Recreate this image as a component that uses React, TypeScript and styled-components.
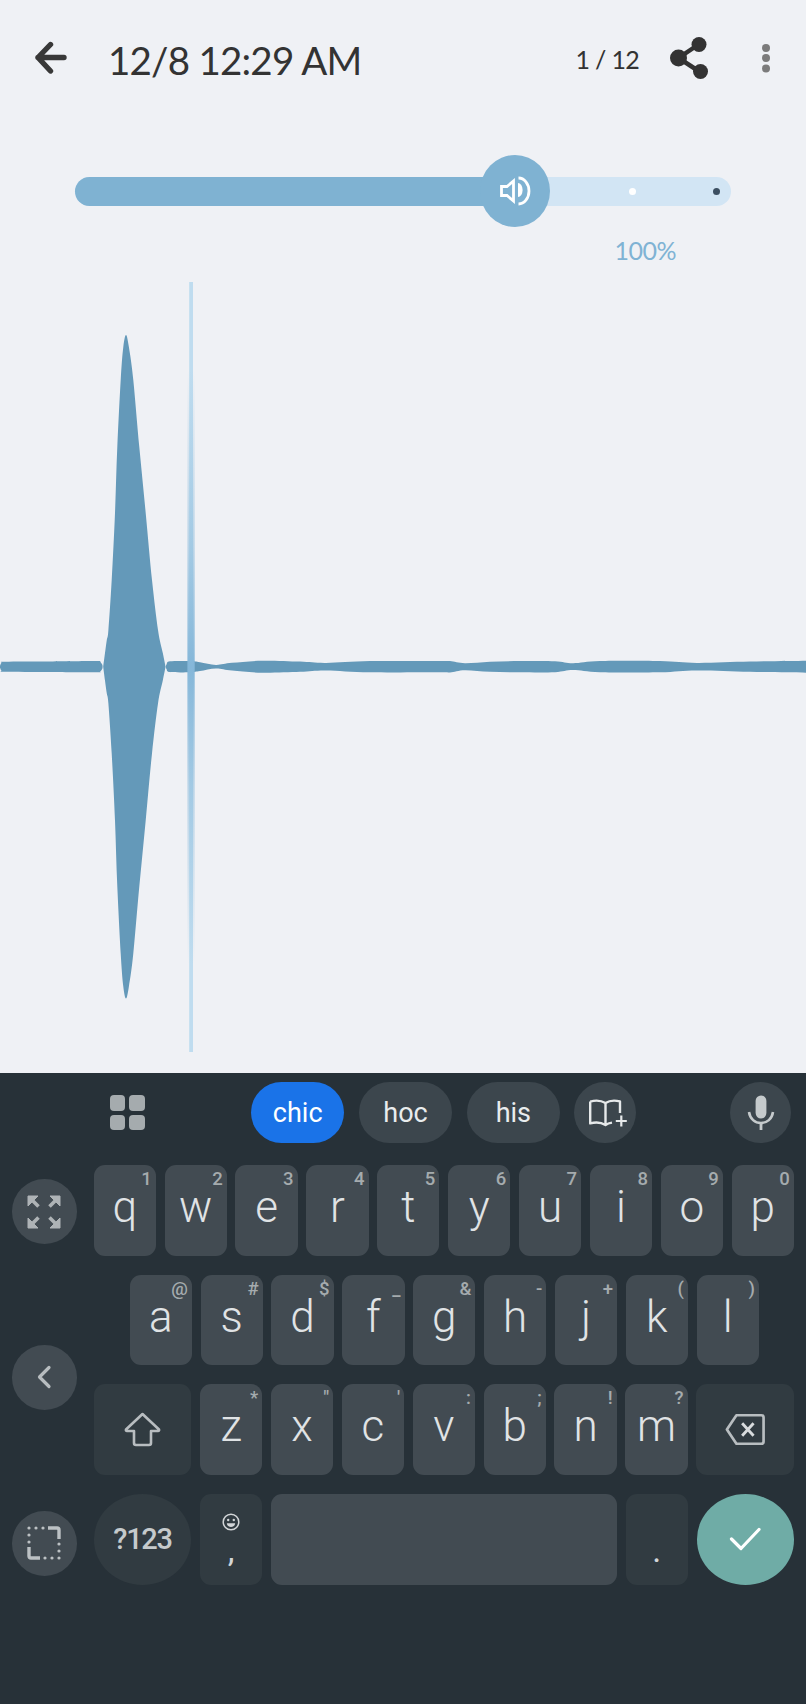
import React from "react";
import styled, { createGlobalStyle } from "styled-components";

const Global = createGlobalStyle`
  html, body { margin: 0; padding: 0; background: #eff1f5; }
  #root { width: 806px; height: 1704px; overflow: hidden; }
`;

const Page = styled.div`
  width: 806px;
  height: 1704px;
  display: flex;
  flex-direction: column;
  background: #eff1f5;
  font-family: Lato, "Noto Sans", sans-serif;
`;

const Header = styled.header`
  height: 115px;
  flex: none;
  display: flex;
  align-items: center;
  padding-left: 33px;
  color: #333;
`;
const BackButton = styled.svg`
  flex: none;
  width: 36px;
  height: 34px;
`;
const Title = styled.h1`
  margin: 4px 0 0 39px;
  font-size: 38.5px;
  line-height: 46px;
  font-weight: 400;
  letter-spacing: -0.77px;
  color: #333;
  white-space: nowrap;
`;
const Counter = styled.span`
  margin: 3px 0 0 auto;
  font-size: 25px;
  line-height: 30px;
  letter-spacing: -0.7px;
  color: #333;
  white-space: nowrap;
`;
const ShareIcon = styled.svg`
  flex: none;
  width: 40px;
  height: 42px;
  margin-left: 30px;
`;
const MoreIcon = styled.svg`
  flex: none;
  width: 10px;
  height: 30px;
  margin: 0 35px 0 52px;
`;

const SliderArea = styled.div`
  flex: none;
  height: 165px;
  padding: 62px 75px 0;
  box-sizing: border-box;
`;
const Track = styled.div`
  position: relative;
  height: 28.6px;
  border-radius: 15px;
  background: #d2e5f4;
`;
const TrackFill = styled.div`
  width: 442px;
  height: 100%;
  border-radius: 15px 0 0 15px;
  background: #7fb2d2;
`;
const Thumb = styled.div`
  position: absolute;
  left: 405px;
  top: -21.7px;
  width: 70px;
  height: 72px;
  border-radius: 50%;
  background: #7fb2d2;
  display: flex;
  align-items: center;
  justify-content: center;
`;
const Stop = styled.span<{ $at: number; $color: string }>`
  position: absolute;
  top: 11px;
  left: ${(p) => p.$at}px;
  width: 7px;
  height: 7px;
  border-radius: 50%;
  background: ${(p) => p.$color};
`;
const Percent = styled.div`
  margin: 29.5px 55px 0 0;
  text-align: right;
  font-size: 25px;
  line-height: 30px;
  letter-spacing: -0.5px;
  color: #7fb3d4;
`;

const Wave = styled.svg`
  display: block;
  flex: none;
  width: 806px;
  height: 793px;
`;

const Keyboard = styled.section`
  flex: 1;
  background: #273138;
  font-family: Roboto, sans-serif;
`;
const SuggestRow = styled.div`
  display: flex;
  align-items: center;
  height: 61.3px;
  margin-top: 9px;
  padding: 0 14.7px 0 110.3px;
`;
const GridIcon = styled.div`
  display: grid;
  grid-template-columns: 15.2px 15.2px;
  gap: 4px;
  margin-right: 106.3px;
`;
const GridCell = styled.span`
  height: 15.2px;
  border-radius: 4px;
  background: #a5abae;
`;
const Chip = styled.div<{ $active?: boolean }>`
  width: 93.5px;
  height: 61.3px;
  margin-right: 14.3px;
  border-radius: 31px;
  display: flex;
  align-items: center;
  justify-content: center;
  font-size: 27px;
  color: ${(p) => (p.$active ? "#ffffff" : "#e9ecee")};
  background: ${(p) => (p.$active ? "#1a73e8" : "#3c464d")};
`;
const RoundChip = styled.div<{ $end?: boolean }>`
  width: 61.3px;
  height: 61.3px;
  border-radius: 50%;
  background: #3c464d;
  display: flex;
  align-items: center;
  justify-content: center;
  margin-left: ${(p) => (p.$end ? "auto" : "0")};
`;

const Body = styled.div`
  display: flex;
  margin-top: 21.7px;
`;
const SideColumn = styled.div`
  flex: none;
  width: 93.7px;
  height: 420.7px;
  box-sizing: border-box;
  padding: 14.3px 0 10px 12px;
  display: flex;
  flex-direction: column;
  justify-content: space-between;
`;
const SideButton = styled.div`
  width: 64.7px;
  height: 64.7px;
  border-radius: 50%;
  background: #424b52;
  display: flex;
  align-items: center;
  justify-content: center;
`;
const Rows = styled.div`
  display: flex;
  flex-direction: column;
  gap: 19.1px;
`;
const Row = styled.div<{ $indent?: number }>`
  display: flex;
  gap: 8.7px;
  height: 90.6px;
  padding-left: ${(p) => p.$indent ?? 0}px;
`;
const Key = styled.div`
  position: relative;
  flex: none;
  width: 62.2px;
  height: 90.6px;
  border-radius: 11px;
  background: #424b52;
  text-align: center;
  font-size: 44px;
  font-weight: 300;
  line-height: 85px;
  color: #e0e3e5;
`;
const Hint = styled.span`
  position: absolute;
  top: 3px;
  right: 4px;
  font-size: 18.5px;
  line-height: 22px;
  font-weight: 500;
  color: #a5abae;
`;
const WideKey = styled.div<{ $round?: boolean; $accent?: boolean }>`
  flex: none;
  width: 97.7px;
  height: 90.6px;
  border-radius: ${(p) => (p.$round ? "50%" : "11px")};
  background: ${(p) => (p.$accent ? "#6faca6" : "#313b41")};
  display: flex;
  align-items: center;
  justify-content: center;
  font-size: 29px;
  font-weight: 500;
  letter-spacing: -1.3px;
  color: #c5cacc;
`;
const PunctKey = styled.div`
  flex: none;
  width: 62.2px;
  height: 90.6px;
  border-radius: 11px;
  background: #313b41;
  display: flex;
  flex-direction: column;
  align-items: center;
  color: #d3d6d8;
  padding-top: 19px;
  box-sizing: border-box;
`;
const SmileIcon = styled.svg<{ $hidden?: boolean }>`
  width: 18px;
  height: 18px;
  flex: none;
  visibility: ${(p) => (p.$hidden ? "hidden" : "visible")};
`;
const PunctMark = styled.span`
  font-size: 34px;
  line-height: 34px;
  font-weight: 400;
  margin-top: 2px;
`;
const SpaceKey = styled.div`
  flex: none;
  width: 346px;
  height: 90.6px;
  border-radius: 11px;
  background: #424b52;
`;

type Pt = [number, number];
const CY = 666.7;

function smooth(points: Pt[], sign: number): string {
  let d = "";
  for (let i = 0; i < points.length - 1; i++) {
    const p0 = points[Math.max(0, i - 1)];
    const p1 = points[i];
    const p2 = points[i + 1];
    const p3 = points[Math.min(points.length - 1, i + 2)];
    const c1: Pt = [p1[0] + (p2[0] - p0[0]) / 6, p1[1] + (p2[1] - p0[1]) / 6];
    const c2: Pt = [p2[0] - (p3[0] - p1[0]) / 6, p2[1] - (p3[1] - p1[1]) / 6];
    d += `C${c1[0].toFixed(1)} ${(CY - sign * c1[1]).toFixed(1)} ${c2[0].toFixed(1)} ${(CY - sign * c2[1]).toFixed(1)} ${p2[0]} ${(CY - sign * p2[1]).toFixed(1)}`;
  }
  return d;
}
function mirrored(pts: Pt[]): string {
  const first = pts[0];
  const last = pts[pts.length - 1];
  const rev = [...pts].reverse();
  return `M${first[0]} ${CY - first[1]}${smooth(pts, 1)}L${last[0]} ${CY + last[1]}${smooth(rev, -1)}Z`;
}

const leftSeg: Pt[] = [[0, 1], [1.5, 4], [5, 5], [50, 5.2], [96, 5.6], [100, 5], [102.3, 2], [102.6, 0]];
const rightSeg: Pt[] = [[165.8, 0], [166.6, 2.5], [170, 5.4], [190, 5.6], [200, 4.4], [216, 1.8], [232, 3.9], [262, 6], [300, 5.1], [326, 3.7], [370, 5.6], [440, 5.6], [450, 5.7], [465, 3.5], [490, 5], [520, 5.6], [555, 5.5], [573, 3.4], [600, 5.6], [660, 5.6], [697, 3.8], [750, 5.1], [806, 6]];

// Outline of the tall burst, upper half, left to right; the lower half mirrors it.
const spike: Pt[] = [[103.2, 0], [105, 13.7], [106.8, 26.7], [108.4, 36.7], [111.7, 86.7], [115, 153.7], [117.3, 219.7], [120.7, 286.7], [123.3, 319.7], [126, 331.7], [128.9, 319.7], [133.3, 286.7], [139.3, 219.7], [145.7, 153.7], [152, 86.7], [158, 36.7], [162.8, 13.7], [165.6, 0]];

const row1: [string, string][] = [["q","1"],["w","2"],["e","3"],["r","4"],["t","5"],["y","6"],["u","7"],["i","8"],["o","9"],["p","0"]];
const row2: [string, string][] = [["a","@"],["s","#"],["d","$"],["f","_"],["g","&"],["h","-"],["j","+"],["k","("],["l",")"]];
const row3: [string, string][] = [["z","*"],["x","\""],["c","'"],["v",":"],["b",";"],["n","!"],["m","?"]];

const LetterKeys = ({ keys }: { keys: [string, string][] }) => (
  <>
    {keys.map(([l, h]) => (
      <Key key={l}>
        {l}
        <Hint>{h}</Hint>
      </Key>
    ))}
  </>
);

export default function App() {
  return (
    <Page>
      <Global />
      <Header>
        <BackButton viewBox="0 0 36 34">
          <path d="M17.5 3.5 L5 16.5 L17.5 30 M5 16.5 H31" fill="none" stroke="#383838" strokeWidth="5.4" strokeLinecap="round" strokeLinejoin="round" />
        </BackButton>
        <Title>12/8 12:29 AM</Title>
        <Counter>1 / 12</Counter>
        <ShareIcon viewBox="0 0 40 42">
          <path d="M29.5 7.5 L9.5 21 L31 35" fill="none" stroke="#333" strokeWidth="4.5" />
          <circle cx="30" cy="7.5" r="7.5" fill="#333" />
          <circle cx="9.5" cy="21" r="8.5" fill="#333" />
          <circle cx="31.5" cy="34.5" r="7.5" fill="#333" />
        </ShareIcon>
        <MoreIcon viewBox="0 0 10 30">
          <circle cx="5" cy="5" r="4" fill="#7b7b7b" />
          <circle cx="5" cy="15" r="4" fill="#7b7b7b" />
          <circle cx="5" cy="25.5" r="4" fill="#7b7b7b" />
        </MoreIcon>
      </Header>

      <SliderArea>
        <Track>
          <TrackFill />
          <Thumb>
            <svg width="32" height="30" viewBox="0 0 32 30">
              <path d="M2.5 10.5 H8 L14.5 5 V25 L8 19.5 H2.5 Z" fill="none" stroke="#fff" strokeWidth="2.8" />
              <path d="M19 7 A4.6 7 0 0 1 19 21 Z" fill="#fff" />
              <path d="M19.5 2 A10.5 13 0 0 1 19.5 28" fill="none" stroke="#fff" strokeWidth="2.8" />
            </svg>
          </Thumb>
          <Stop $at={554} $color="#ffffff" />
          <Stop $at={638} $color="#3c4f61" />
        </Track>
        <Percent>100%</Percent>
      </SliderArea>

      <Wave viewBox="0 280 806 793">
        <defs>
          <linearGradient id="headGrad" x1="0" y1="0" x2="0" y2="1">
            <stop offset="0" stopColor="#85b7d9" stopOpacity="0" />
            <stop offset="0.3" stopColor="#85b7d9" stopOpacity="0.5" />
            <stop offset="0.5" stopColor="#85b7d9" />
            <stop offset="0.7" stopColor="#85b7d9" stopOpacity="0.5" />
            <stop offset="1" stopColor="#85b7d9" stopOpacity="0" />
          </linearGradient>
        </defs>
        <path d={mirrored(leftSeg)} fill="#6499b9" />
        <path d={mirrored(spike)} fill="#6499b9" />
        <path d={mirrored(rightSeg)} fill="#6499b9" />
        <rect x="189.2" y="282" width="3.8" height="770" fill="#bfdcef" />
        <rect x="187.4" y="370" width="7.3" height="594" fill="url(#headGrad)" />
      </Wave>

      <Keyboard>
        <SuggestRow>
          <GridIcon>
            <GridCell />
            <GridCell />
            <GridCell />
            <GridCell />
          </GridIcon>
          <Chip $active>chic</Chip>
          <Chip>hoc</Chip>
          <Chip>his</Chip>
          <RoundChip>
            <svg width="47" height="30" viewBox="0 0 47 30">
              <path d="M8.2 3.6 C13 2.2 19 2.4 23.5 5 C27.5 2.4 33 2.2 38 3.4 V15 M8.2 3.6 V25.4 C13 24 19 24.2 23.5 27 C25.5 25.6 27.5 25 30 24.6 M23.5 5 V27" fill="none" stroke="#e6e9ea" strokeWidth="2.4" strokeLinejoin="round" />
              <path d="M39.3 17.5 V28.5 M33.8 23 H44.8" fill="none" stroke="#e6e9ea" strokeWidth="2.2" />
            </svg>
          </RoundChip>
          <RoundChip $end>
            <svg width="28" height="36" viewBox="0 0 28 36">
              <rect x="8.6" y="0.5" width="10.8" height="23" rx="5.4" fill="#c5cacc" />
              <path d="M2 17 C3 24 8 28 14 28 C20 28 25 24 26 17" fill="none" stroke="#c5cacc" strokeWidth="2.6" />
              <path d="M14 28 V35" stroke="#c5cacc" strokeWidth="2.8" />
            </svg>
          </RoundChip>
        </SuggestRow>
        <Body>
          <SideColumn>
            <SideButton>
              <svg width="34" height="34" viewBox="0 0 34 34">
                <g fill="#aeb3b6" stroke="#aeb3b6">
                  <path d="M1 1 H11 L1 11 Z" strokeWidth="1" />
                  <path d="M33 1 H23 L33 11 Z" strokeWidth="1" />
                  <path d="M1 33 H11 L1 23 Z" strokeWidth="1" />
                  <path d="M33 33 H23 L33 23 Z" strokeWidth="1" />
                  <path d="M4 4 L11.5 11.5 M30 4 L22.5 11.5 M4 30 L11.5 22.5 M30 30 L22.5 22.5" strokeWidth="3.6" fill="none" />
                </g>
              </svg>
            </SideButton>
            <SideButton>
              <svg width="16" height="24" viewBox="0 0 16 24">
                <path d="M13 2.5 L3.5 12 L13 21.5" fill="none" stroke="#b8bdc0" strokeWidth="3.2" strokeLinecap="round" strokeLinejoin="round" />
              </svg>
            </SideButton>
            <SideButton>
              <svg width="34" height="34" viewBox="0 0 34 34">
                <path d="M21 2 H30 Q32 2 32 4 V13" fill="none" stroke="#bcc1c4" strokeWidth="3.4" />
                <path d="M13 32 H4 Q2 32 2 30 V21" fill="none" stroke="#bcc1c4" strokeWidth="3.4" />
                <g fill="#bcc1c4">
                  <circle cx="2" cy="2" r="1.6" />
                  <circle cx="9" cy="2" r="1.6" />
                  <circle cx="16" cy="2" r="1.6" />
                  <circle cx="2" cy="9" r="1.6" />
                  <circle cx="2" cy="16" r="1.6" />
                  <circle cx="32" cy="18" r="1.6" />
                  <circle cx="32" cy="25" r="1.6" />
                  <circle cx="32" cy="32" r="1.6" />
                  <circle cx="18" cy="32" r="1.6" />
                  <circle cx="25" cy="32" r="1.6" />
                </g>
              </svg>
            </SideButton>
          </SideColumn>
          <Rows>
            <Row>
              <LetterKeys keys={row1} />
            </Row>
            <Row $indent={36}>
              <LetterKeys keys={row2} />
            </Row>
            <Row>
              <WideKey>
                <svg width="37" height="35" viewBox="0 0 37 35">
                  <path d="M18.5 2 L35 17.5 Q35.5 19 34 19 H27 V31 Q27 33 25 33 H12 Q10 33 10 31 V19 H3 Q1.5 19 2 17.5 Z" fill="none" stroke="#b8bdc0" strokeWidth="2.6" strokeLinejoin="round" />
                </svg>
              </WideKey>
              <LetterKeys keys={row3} />
              <WideKey>
                <svg width="40" height="33" viewBox="0 0 42 34">
                  <path d="M12 2 H38 Q40.5 2 40.5 4.5 V29.5 Q40.5 32 38 32 H12 L2 17 Z" fill="none" stroke="#b8bdc0" strokeWidth="2.8" strokeLinejoin="round" />
                  <path d="M18 10.5 L30 23.5 M30 10.5 L18 23.5" stroke="#d8dbdd" strokeWidth="3" />
                </svg>
              </WideKey>
            </Row>
            <Row>
              <WideKey $round>?123</WideKey>
              <PunctKey>
                <SmileIcon viewBox="0 0 18 18">
                  <circle cx="9" cy="9" r="7.8" fill="none" stroke="#d3d6d8" strokeWidth="1.5" />
                  <circle cx="6.2" cy="7" r="1.2" fill="#d3d6d8" />
                  <circle cx="11.8" cy="7" r="1.2" fill="#d3d6d8" />
                  <path d="M4.8 10.2 H13.2 C12.8 13 11 14 9 14 C7 14 5.2 13 4.8 10.2 Z" fill="#d3d6d8" />
                </SmileIcon>
                <PunctMark>,</PunctMark>
              </PunctKey>
              <SpaceKey />
              <PunctKey>
                <SmileIcon $hidden viewBox="0 0 18 18" />
                <PunctMark>.</PunctMark>
              </PunctKey>
              <WideKey $round $accent>
                <svg width="32" height="26" viewBox="0 0 32 26">
                  <path d="M2.5 13 L12 22.5 L30 3.5" fill="none" stroke="#fff" strokeWidth="3.2" strokeLinecap="round" strokeLinejoin="round" />
                </svg>
              </WideKey>
            </Row>
          </Rows>
        </Body>
      </Keyboard>
    </Page>
  );
}
